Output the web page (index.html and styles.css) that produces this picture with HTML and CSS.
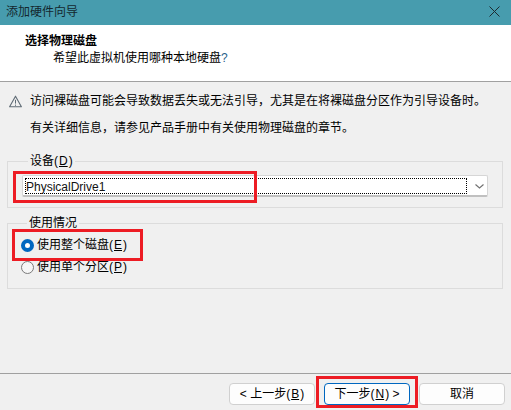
FILE: index.html
```html
<!DOCTYPE html>
<html lang="zh-CN">
<head>
    <meta charset="UTF-8">
    <title>添加硬件向导</title>
    <link rel="stylesheet" href="styles.css">
</head>
<body>
    <!-- Title Bar -->
    <div class="titlebar">
        <span>添加硬件向导</span>
        <svg class="close-icon" width="11" height="11" viewBox="0 0 11 11"><path d="M0.5 0.5L10.5 10.5M10.5 0.5L0.5 10.5" stroke="#1c2b30" stroke-width="1" fill="none"/></svg>
    </div>

    <!-- Header -->
    <div class="header">
        <div class="header-title">选择物理磁盘</div>
        <div class="header-sub">希望此虚拟机使用哪种本地硬盘<span class="blue-q">?</span></div>
    </div>

    <!-- Main Content -->
    <div class="content">
        <div class="warning">
            <svg class="warning-icon" width="13" height="13" viewBox="0 0 13 13">
                <path d="M6.5 1.2L12.4 11.8H0.6Z" fill="none" stroke="#5f6b75" stroke-width="1.1" stroke-linejoin="round"/>
                <path d="M6.5 4.8V8.6M6.5 9.6V10.8" stroke="#5f6b75" stroke-width="1"/>
            </svg>
            <span>访问裸磁盘可能会导致数据丢失或无法引导，尤其是在将裸磁盘分区作为引导设备时。</span>
        </div>
        <p class="note">有关详细信息，请参见产品手册中有关使用物理磁盘的章节。</p>

        <fieldset class="group device-group">
            <legend>设备(<u>D</u>)</legend>
            <div class="combo">
                <div class="combo-value">PhysicalDrive1</div>
                <svg class="combo-arrow" width="9" height="5" viewBox="0 0 9 5"><path d="M0.5 0.5L4.5 4L8.5 0.5" fill="none" stroke="#707070" stroke-width="1.1"/></svg>
            </div>
        </fieldset>

        <fieldset class="group usage-group">
            <legend>使用情况</legend>
            <div class="radio-row">
                <span class="radio radio-on"></span>
                <span>使用整个磁盘(<u>E</u>)</span>
            </div>
            <div class="radio-row">
                <span class="radio"></span>
                <span>使用单个分区(<u>P</u>)</span>
            </div>
        </fieldset>
    </div>

    <!-- Footer Buttons -->
    <div class="footer">
        <button class="btn">&lt; 上一步(<u>B</u>)</button>
        <button class="btn btn-default">下一步(<u>N</u>) &gt;</button>
        <button class="btn">取消</button>
    </div>

    <!-- Red annotation boxes -->
    <div class="mark mark-device"></div>
    <div class="mark mark-radio"></div>
    <div class="mark mark-next"></div>
</body>
</html>
```

FILE: styles.css
```css
/* Basic Reset */
html, body {
    margin: 0;
    padding: 0;
}

body {
    position: relative;
    width: 511px;
    height: 410px;
    overflow: hidden;
    display: flex;
    flex-direction: column;
    background-color: #f0f0f0;
    color: #000;
    font-family: "Liberation Sans", "Noto Sans CJK SC", sans-serif;
    font-size: 12px;
    line-height: 16px;
}

/* Mnemonic letters sit a little wider than Arial's */
u {
    margin: 0 1px;
}

/* Title Bar */
.titlebar {
    height: 25px;
    flex: none;
    display: flex;
    align-items: center;
    justify-content: space-between;
    padding: 0 11px 2px 6px;
    box-sizing: border-box;
    background-color: #479cae;
    color: #14282e;
}

/* Header */
.header {
    height: 57px;
    flex: none;
    box-sizing: border-box;
    padding-top: 8px;
    background-color: #fff;
    border-bottom: 1px solid #a0a0a0;
}

.header-title {
    padding-left: 25px;
    font-weight: bold;
}

.header-sub {
    padding-left: 53px;
    margin-top: 1px;
}

.blue-q {
    color: #2a5f8a;
}

/* Main Content */
.content {
    flex: 1;
    padding: 11px 8px 0 7px;
}

.warning {
    display: flex;
    align-items: center;
    gap: 8px;
    padding-left: 2px;
}

.warning-icon {
    flex: none;
    margin-top: 1px;
}

.note {
    margin: 11px 0 0 23px;
}

.group {
    margin: 0;
    padding: 0;
    border: 1px solid #dcdcdc;
    box-sizing: border-box;
    min-width: 0;
}

.group legend {
    margin-left: 6px;
    padding: 0 2px;
    line-height: 14px;
}

.device-group {
    height: 54px;
    margin-top: 18px;
    padding: 7px 14px 0 14px;
}

.usage-group {
    height: 73px;
    margin-top: 8px;
    padding: 4px 0 0 13px;
}

.combo {
    height: 22px;
    box-sizing: border-box;
    display: flex;
    align-items: center;
    background-color: #fff;
    border: 1px solid #d6d6d6;
    border-bottom: 2px solid #c0c0c0;
    border-radius: 2px;
    padding: 0 0 0 2px;
}

.combo-value {
    flex: 1;
    height: 16px;
    box-sizing: border-box;
    border: 1px dotted #000;
    padding-top: 1px;
    line-height: 14px;
    color: #111;
}

.combo-arrow {
    margin: 1px 3px 0 8px;
}

.radio-row {
    display: flex;
    align-items: center;
    gap: 3px;
    height: 22px;
}

.radio {
    width: 13px;
    height: 13px;
    box-sizing: border-box;
    border: 1px solid #7a7a7a;
    border-radius: 50%;
    background-color: #f6f6f6;
}

.radio-on {
    border: 4px solid #0067c0;
    background-color: #fff;
}

/* Footer Buttons */
.footer {
    height: 37px;
    flex: none;
    box-sizing: border-box;
    border-top: 1px solid #a0a0a0;
    display: flex;
    justify-content: flex-end;
    gap: 9px;
    padding: 9px 6px 0 0;
}

.btn {
    width: 86px;
    height: 22px;
    padding: 0;
    font: inherit;
    color: #000;
    background-color: #fdfdfd;
    border: 1px solid #d0d0d0;
    border-radius: 4px;
}

.btn-default {
    border-color: #0067c0;
}

/* Red annotation boxes */
.mark {
    position: absolute;
    box-sizing: border-box;
    border: 3px solid #ed1c24;
}

.mark-device {
    left: 13px;
    top: 171px;
    width: 244px;
    height: 32px;
}

.mark-radio {
    left: 12px;
    top: 229px;
    width: 131px;
    height: 32px;
}

.mark-next {
    left: 316px;
    top: 376px;
    width: 102px;
    height: 32px;
}
```
